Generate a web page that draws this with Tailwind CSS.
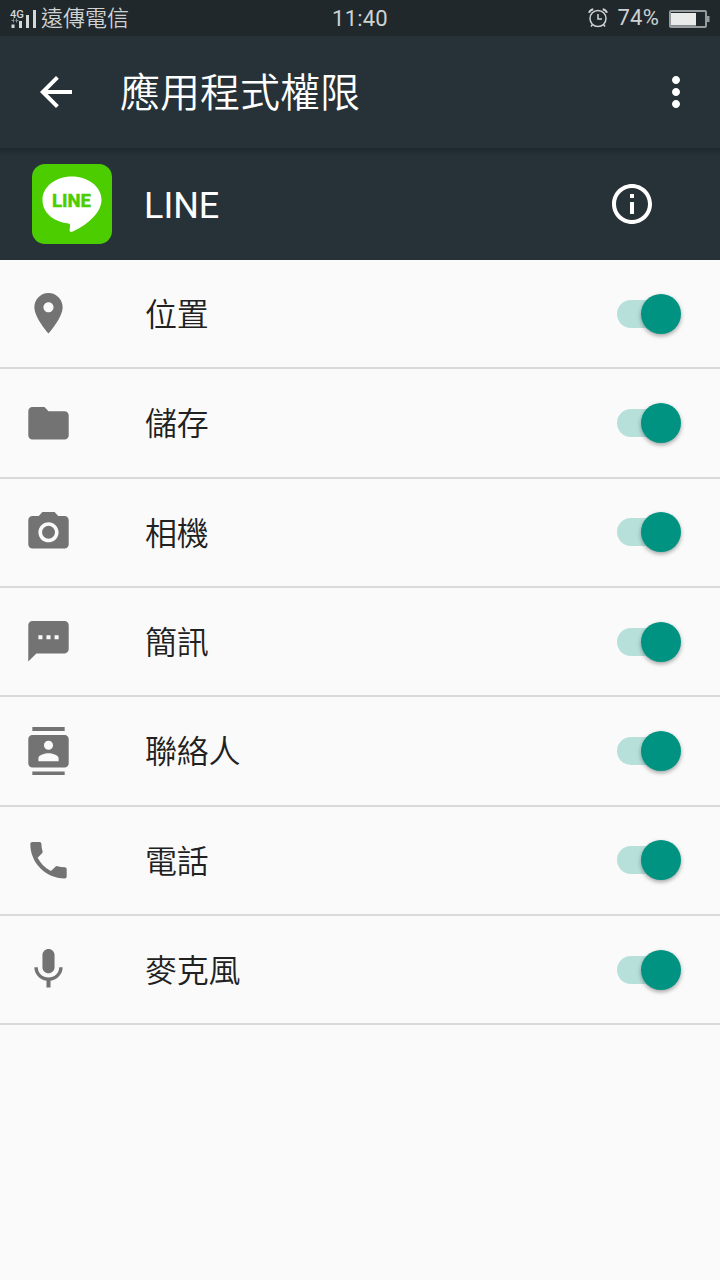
<!DOCTYPE html>
<html lang="zh-Hant">
<head>
    <meta charset="UTF-8">
    <meta name="viewport" content="width=device-width, initial-scale=1.0">
    <title>應用程式權限</title>
    <script src="https://cdn.jsdelivr.net/npm/@tailwindcss/browser@4"></script>
</head>
<body class="h-screen overflow-hidden bg-[#fafafa] font-['Roboto','Noto_Sans_CJK_TC',sans-serif]">
    <!-- Status bar -->
    <div class="h-9 grid grid-cols-3 items-center bg-[#20282c] text-[#cfd2d3] text-[22px] leading-none">
        <div class="flex items-center pl-[9px] gap-1">
            <svg class="w-7 h-9" viewBox="0 0 28 36" fill="#d5d8d9">
                <text x="1" y="16.5" font-family="Roboto" font-size="10.5" font-weight="500" textLength="14" lengthAdjust="spacingAndGlyphs">4G</text>
                <path d="M2.500 23.500h3v3.500h-3zM10 20h3v7h-3zM17 14h3v13h-3zM24 9h3v18h-3z"/>
                <path d="M4.500 17.500v4M7.500 17.500v4M2.500 19.500h3M6.500 19.500h3" fill="none" stroke="#899093" stroke-width="1"/>
            </svg>
            <span class="leading-9 font-[350] pt-px">遠傳電信</span>
        </div>
        <div class="text-center leading-9 tracking-[0.2px] pt-px">11:40</div>
        <div class="flex items-center justify-end pr-[10px]">
            <svg class="w-5 h-5 mr-[10px] -mt-[2px]" viewBox="0 0 20 20" fill="none" stroke="#cfd2d3" stroke-width="1.5">
                <circle cx="10" cy="10.500" r="8"/>
                <path d="M10 6v5h4"/>
                <path d="M1 4.800Q2 1.800 5.300 1.200M19 4.800Q18 1.800 14.700 1.200" stroke-width="2"/>
                <path d="M4.500 16.500L3 18.500M15.500 16.500l1.500 2"/>
            </svg>
            <span class="leading-9 tracking-[0.2px] mr-[10px] -mt-px">74%</span>
            <svg class="w-[41px] h-[18px]" viewBox="0 0 41 18">
                <rect x="1" y="1" width="36" height="16" rx="1" fill="none" stroke="#969b9d" stroke-width="2"/>
                <rect x="2" y="3" width="25" height="12.500" fill="#e9ebeb"/>
                <path d="M38 6h2.500v6H38z" fill="#969b9d"/>
            </svg>
        </div>
    </div>

    <!-- App bar -->
    <header class="h-28 flex items-center bg-[#263238] text-white pl-8 pr-5">
        <svg class="w-12 h-12" viewBox="0 0 24 24" fill="currentColor"><path d="M20 11H7.830l5.590-5.590L12 4l-8 8 8 8 1.410-1.410L7.830 13H20v-2z"/></svg>
        <h1 class="ml-10 pt-1 text-[40px] leading-[48px] font-[350] flex-1">應用程式權限</h1>
        <svg class="w-12 h-12" viewBox="0 0 24 24" fill="currentColor"><path d="M12 8c1.100 0 2-.900 2-2s-.900-2-2-2-2 .900-2 2 .900 2 2 2zm0 2c-1.100 0-2 .900-2 2s.900 2 2 2 2-.900 2-2-.900-2-2-2zm0 6c-1.100 0-2 .900-2 2s.900 2 2 2 2-.900 2-2-.900-2-2-2z"/></svg>
    </header>

    <!-- App info -->
    <section class="h-28 flex items-center bg-[#263238] bg-linear-to-b from-[#1e292e] to-[#263238] to-[8px] text-white pl-8 pr-16">
        <svg class="w-20 h-20" viewBox="0 0 80 80">
            <rect width="80" height="80" rx="13" fill="#4ccd00"/>
            <path d="M39.800 12.500C23.700 12.500 10.500 22.500 10.500 36c0 12.500 10.500 21.500 26 23.500 1.500.300 1.700 1.500 1.500 3.500-.300 2.500-1.200 5.500 2 4.700C47 65.500 69.500 52 69.500 36c0-13.500-13.500-23.500-29.700-23.500z" fill="#fff"/>
            <text x="20" y="43" font-family="Roboto" font-size="18" font-weight="800" fill="#4ccd00" stroke="#4ccd00" stroke-width="0.300" textLength="39" lengthAdjust="spacingAndGlyphs">LINE</text>
        </svg>
        <h2 class="ml-8 pt-1 text-[36px] leading-10 flex-1">LINE</h2>
        <svg class="w-12 h-12" viewBox="0 0 24 24" fill="currentColor"><path d="M11 17h2v-6h-2v6zm1-15C6.480 2 2 6.480 2 12s4.480 10 10 10 10-4.480 10-10S17.520 2 12 2zm0 18c-4.410 0-8-3.590-8-8s3.590-8 8-8 8 3.590 8 8-3.590 8-8 8zM11 9h2V7h-2v2z"/></svg>
    </section>

    <!-- Permissions -->
    <ul class="text-[32px] tracking-[-0.3px] font-[350] text-[#212121] fill-[#737373]">
        <li class="h-[109.33px] flex items-center border-b-2 border-[#dadada] pl-6 pr-[39px]">
            <svg class="w-[49px] h-[48.500px]" viewBox="0 0 24 24"><path d="M12 2C8.130 2 5 5.130 5 9c0 5.250 7 13 7 13s7-7.750 7-13c0-3.870-3.130-7-7-7zm0 9.500c-1.380 0-2.500-1.120-2.500-2.500s1.120-2.500 2.500-2.500 2.500 1.120 2.500 2.500-1.120 2.500-2.500 2.500z"/></svg>
            <span class="ml-[72px] pt-[3px] flex-1">位置</span>
            <span class="w-16 h-7 flex items-center justify-end rounded-full bg-linear-to-r from-[#b7e0da] from-75% to-transparent to-75%"><span class="w-10 h-10 rounded-full bg-[#009382] shadow-[0_2px_4px_rgba(0,0,0,0.35)]"></span></span>
        </li>
        <li class="h-[109.33px] flex items-center border-b-2 border-[#dadada] pl-6 pr-[39px]">
            <svg class="w-[49px] h-[48.500px]" viewBox="0 0 24 24"><path d="M10 4H4c-1.100 0-1.990.900-1.990 2L2 18c0 1.100.900 2 2 2h16c1.100 0 2-.900 2-2V8c0-1.100-.900-2-2-2h-8l-2-2z"/></svg>
            <span class="ml-[72px] pt-[3px] flex-1">儲存</span>
            <span class="w-16 h-7 flex items-center justify-end rounded-full bg-linear-to-r from-[#b7e0da] from-75% to-transparent to-75%"><span class="w-10 h-10 rounded-full bg-[#009382] shadow-[0_2px_4px_rgba(0,0,0,0.35)]"></span></span>
        </li>
        <li class="h-[109.33px] flex items-center border-b-2 border-[#dadada] pl-6 pr-[39px]">
            <svg class="w-[49px] h-[48.500px]" viewBox="0 0 24 24"><circle cx="12" cy="12" r="3.200"/><path d="M9 2L7.170 4H4c-1.100 0-2 .900-2 2v12c0 1.100.900 2 2 2h16c1.100 0 2-.900 2-2V6c0-1.100-.900-2-2-2h-3.170L15 2H9zm3 15c-2.760 0-5-2.240-5-5s2.240-5 5-5 5 2.240 5 5-2.240 5-5 5z"/></svg>
            <span class="ml-[72px] pt-[3px] flex-1">相機</span>
            <span class="w-16 h-7 flex items-center justify-end rounded-full bg-linear-to-r from-[#b7e0da] from-75% to-transparent to-75%"><span class="w-10 h-10 rounded-full bg-[#009382] shadow-[0_2px_4px_rgba(0,0,0,0.35)]"></span></span>
        </li>
        <li class="h-[109.33px] flex items-center border-b-2 border-[#dadada] pl-6 pr-[39px]">
            <svg class="w-[49px] h-[48.500px]" viewBox="0 0 24 24"><path d="M20 2H4c-1.100 0-1.990.900-1.990 2L2 22l4-4h14c1.100 0 2-.900 2-2V4c0-1.100-.900-2-2-2zM9 11H7V9h2v2zm4 0h-2V9h2v2zm4 0h-2V9h2v2z"/></svg>
            <span class="ml-[72px] pt-[3px] flex-1">簡訊</span>
            <span class="w-16 h-7 flex items-center justify-end rounded-full bg-linear-to-r from-[#b7e0da] from-75% to-transparent to-75%"><span class="w-10 h-10 rounded-full bg-[#009382] shadow-[0_2px_4px_rgba(0,0,0,0.35)]"></span></span>
        </li>
        <li class="h-[109.33px] flex items-center border-b-2 border-[#dadada] pl-6 pr-[39px]">
            <svg class="w-[49px] h-[48.500px]" viewBox="0 0 24 24"><path d="M20 0H4v2h16V0zM4 24h16v-2H4v2zM20 4H4c-1.100 0-2 .900-2 2v12c0 1.100.900 2 2 2h16c1.100 0 2-.900 2-2V6c0-1.100-.900-2-2-2zm-8 2.750c1.240 0 2.250 1.010 2.250 2.250s-1.010 2.250-2.250 2.250S9.750 10.240 9.750 9 10.760 6.750 12 6.750zM17 17H7v-1.500c0-1.670 3.330-2.500 5-2.500s5 .830 5 2.500V17z"/></svg>
            <span class="ml-[72px] pt-[3px] flex-1">聯絡人</span>
            <span class="w-16 h-7 flex items-center justify-end rounded-full bg-linear-to-r from-[#b7e0da] from-75% to-transparent to-75%"><span class="w-10 h-10 rounded-full bg-[#009382] shadow-[0_2px_4px_rgba(0,0,0,0.35)]"></span></span>
        </li>
        <li class="h-[109.33px] flex items-center border-b-2 border-[#dadada] pl-6 pr-[39px]">
            <svg class="w-[49px] h-[48.500px]" viewBox="0 0 24 24"><path d="M6.620 10.790c1.440 2.830 3.760 5.140 6.590 6.590l2.200-2.200c.270-.270.670-.360 1.020-.240 1.120.370 2.330.570 3.570.570.550 0 1 .450 1 1V20c0 .550-.450 1-1 1-9.390 0-17-7.610-17-17 0-.550.450-1 1-1h3.500c.550 0 1 .450 1 1 0 1.250.200 2.450.570 3.570.110.350.030.740-.250 1.020l-2.200 2.200z"/></svg>
            <span class="ml-[72px] pt-[3px] flex-1">電話</span>
            <span class="w-16 h-7 flex items-center justify-end rounded-full bg-linear-to-r from-[#b7e0da] from-75% to-transparent to-75%"><span class="w-10 h-10 rounded-full bg-[#009382] shadow-[0_2px_4px_rgba(0,0,0,0.35)]"></span></span>
        </li>
        <li class="h-[109.33px] flex items-center border-b-2 border-[#dadada] pl-6 pr-[39px]">
            <svg class="w-[49px] h-[48.500px]" viewBox="0 0 24 24"><path d="M12 14c1.660 0 2.990-1.340 2.990-3L15 5c0-1.660-1.340-3-3-3S9 3.340 9 5v6c0 1.660 1.340 3 3 3zm5.300-3c0 3-2.540 5.100-5.300 5.100S6.700 14 6.700 11H5c0 3.410 2.720 6.230 6 6.720V21h2v-3.280c3.280-.480 6-3.300 6-6.720h-1.700z"/></svg>
            <span class="ml-[72px] pt-[3px] flex-1">麥克風</span>
            <span class="w-16 h-7 flex items-center justify-end rounded-full bg-linear-to-r from-[#b7e0da] from-75% to-transparent to-75%"><span class="w-10 h-10 rounded-full bg-[#009382] shadow-[0_2px_4px_rgba(0,0,0,0.35)]"></span></span>
        </li>
    </ul>
</body>
</html>
